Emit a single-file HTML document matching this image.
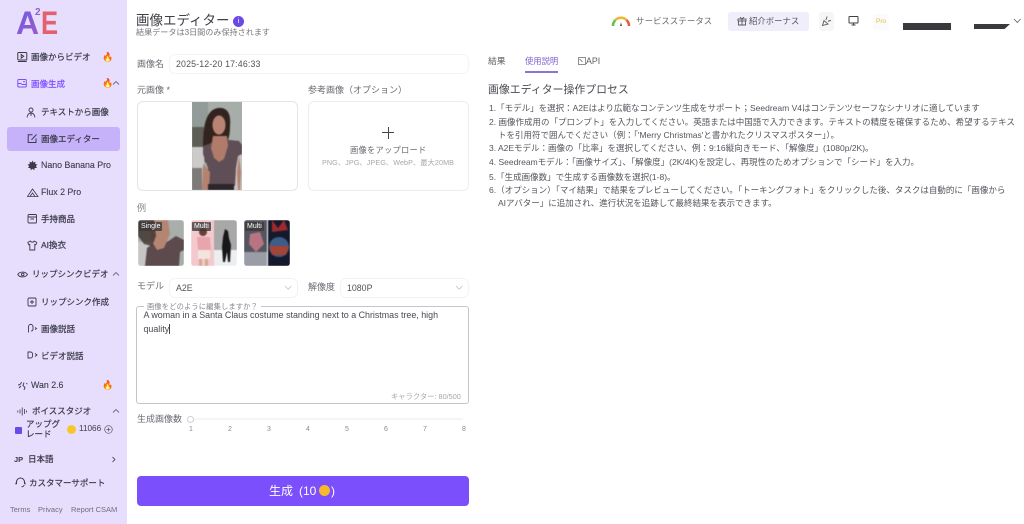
<!DOCTYPE html>
<html lang="ja"><head><meta charset="utf-8"><title>画像エディター</title>
<style>
html,body{margin:0;padding:0;width:1024px;height:524px;overflow:hidden;background:#fff}
body{font-family:"Liberation Sans","Noto Sans CJK JP",sans-serif;color:#3f3f46;position:relative;filter:blur(.3px)}
.t{position:absolute;white-space:nowrap;line-height:14px}
.s{position:absolute}
svg{position:absolute;overflow:visible}
.side{position:absolute;left:0;top:0;width:127px;height:524px;background:#e7defd}
.n{font-size:8.5px;color:#3a3a48;font-weight:400;-webkit-text-stroke:.2px #3a3a48}
.box{position:absolute;border:1px solid #ececf0;border-radius:6px;box-sizing:border-box;background:#fff}
.lbl{font-size:9px;color:#6b6b73}
.li{font-size:8.5px;color:#55555d}
.num{font-size:7px;color:#8a8a90;width:10px;text-align:center}
.tag{position:absolute;left:1px;top:2px;font-size:7px;line-height:9px;color:#fff;background:#3a3a3acc;padding:0 2px;border-radius:1px;white-space:nowrap}
.pic{filter:blur(.5px)}
</style></head><body>
<div class="side"></div>

<!-- logo -->
<div class="t" style="left:16px;top:8px;font-size:32px;line-height:30px;font-weight:700;background:linear-gradient(135deg,#6b5be6,#a05bc8);-webkit-background-clip:text;color:transparent">A</div>
<div class="t" style="left:35px;top:8px;font-size:10px;line-height:10px;font-weight:700;color:#8f62c8">2</div>
<div class="t" style="left:41px;top:8px;font-size:32px;line-height:30px;font-weight:700;color:#e4606f;transform-origin:left;transform:scaleX(.8)">E</div>

<!-- sidebar items -->
<svg style="left:17px;top:51px" width="12" height="12" fill="none" stroke="#3a3a48" stroke-width="1"><rect x=".8" y="1.5" width="9" height="7.5" rx="1"/><path d="M.8 10.5h9M4.2 3.5l2.5 1.8-2.5 1.8z"/></svg>
<div class="t n" style="left:31px;top:50px">画像からビデオ</div>
<div class="t" style="left:102px;top:50px;font-size:9px">🔥</div>

<svg style="left:17px;top:78px" width="12" height="12" fill="none" stroke="#7c4dff" stroke-width="1"><rect x=".8" y="1.5" width="8.5" height="7.5" rx="1"/><path d="M.8 5.5h3l1.5 1h4M6 3.8h2"/></svg>
<div class="t n" style="left:31px;top:77px;color:#7c4dff;-webkit-text-stroke:.2px #7c4dff">画像生成</div>
<div class="t" style="left:102px;top:76px;font-size:9px">🔥</div>
<svg style="left:112px;top:80px" width="9" height="6" fill="none" stroke="#6b6b78" stroke-width=".9"><path d="M1 4.500L4 1.500l3 3"/></svg>

<svg style="left:26px;top:107px" width="12" height="12" fill="none" stroke="#3a3a48" stroke-width=".9"><circle cx="5" cy="3" r="2"/><path d="M1 10.5c.5-3 2-4.500 4-4.500s3.500 1.500 4 4.500M5 6.500v2.500"/></svg>
<div class="t n" style="left:41px;top:105px">テキストから画像</div>

<div class="s" style="left:7px;top:127px;width:113px;height:24px;background:#c6b2fb;border-radius:3px"></div>
<svg style="left:27px;top:133px" width="12" height="12" fill="none" stroke="#3a3a48" stroke-width="1"><path d="M9 5.500V9.500H1.200V1.800H5.500M4.500 6.800L9.500 1.500"/></svg>
<div class="t n" style="left:41px;top:132px">画像エディター</div>

<svg style="left:27px;top:160px" width="11" height="11" fill="#3a3a48"><path d="M5.500 .5l1 2 2-.8-.3 2.200 2.300.8-1.700 1.300 1.200 2-2.300 0-.5 2.300-1.700-1.500-1.700 1.500-.5-2.300-2.300 0 1.200-2L.5 4.700l2.300-.8-.3-2.200 2 .8z"/></svg>
<div class="t n" style="left:41px;top:158px;font-size:8.800px;-webkit-text-stroke:.1px #3a3a48">Nano Banana Pro</div>

<svg style="left:27px;top:187px" width="12" height="11" fill="none" stroke="#3a3a48" stroke-width=".8"><path d="M.5 9.500L5.500 2l5.500 7.500zM3 9.500l2.500-3.500 2.500 3.500"/></svg>
<div class="t n" style="left:41px;top:185px;font-size:8.800px;-webkit-text-stroke:.1px #3a3a48">Flux 2 Pro</div>

<svg style="left:27px;top:213px" width="11" height="12" fill="none" stroke="#3a3a48" stroke-width=".9"><rect x="1" y="1.500" width="8.500" height="8.500" rx="1"/><path d="M1 4h8.500M3.500 6h3.500"/></svg>
<div class="t n" style="left:41px;top:212px">手持商品</div>

<svg style="left:27px;top:240px" width="11" height="11" fill="none" stroke="#3a3a48" stroke-width=".9"><path d="M3.500 1L.8 2.500l1 2.300 1-.4V10h5V4.400l1 .4 1-2.300L7.200 1C6.800 2.500 4 2.500 3.500 1z"/></svg>
<div class="t n" style="left:41px;top:238px">AI換衣</div>

<svg style="left:17px;top:270px" width="12" height="9" fill="none" stroke="#3a3a48" stroke-width=".9"><path d="M.8 4.500C2.500 1.500 8 1 10.500 4.500 8 8 2.500 7.500.8 4.500z"/><circle cx="5.700" cy="4.500" r="1.300"/></svg>
<div class="t n" style="left:32px;top:267px">リップシンクビデオ</div>
<svg style="left:112px;top:271px" width="9" height="6" fill="none" stroke="#6b6b78" stroke-width=".9"><path d="M1 4.500L4 1.500l3 3"/></svg>

<svg style="left:27px;top:297px" width="11" height="11" fill="none" stroke="#3a3a48" stroke-width=".9"><rect x="1" y="1" width="8" height="8" rx="1"/><path d="M5 3v4M3 5h4"/></svg>
<div class="t n" style="left:41px;top:295px">リップシンク作成</div>

<svg style="left:27px;top:323px" width="12" height="12" fill="none" stroke="#3a3a48" stroke-width=".9"><path d="M1.500 9.500V4c0-3.500 4.500-3.500 4.500 0v2c0 1.500-1 2-2 2M8 4.500l1.500 1L8 6.500"/></svg>
<div class="t n" style="left:41px;top:322px">画像説話</div>

<svg style="left:27px;top:351px" width="12" height="9" fill="none" stroke="#3a3a48" stroke-width=".9"><path d="M1 1h2.500a2 2 0 012 2v2a2 2 0 01-2 2H1zM8 2.500l2 1.500-2 1.500"/></svg>
<div class="t n" style="left:41px;top:349px">ビデオ説話</div>

<svg style="left:17px;top:380px" width="12" height="11" fill="none" stroke="#3a3a48" stroke-width=".9"><path d="M1 5c2 0 3-1 3.500-3M7 2.500L6 5.500l2 2-1 2.500M2 8l2-2M9 3.500l1.500.5"/></svg>
<div class="t n" style="left:31px;top:378px;font-size:8.800px;-webkit-text-stroke:.1px #3a3a48">Wan 2.6</div>
<div class="t" style="left:102px;top:378px;font-size:9px">🔥</div>

<svg style="left:17px;top:407px" width="11" height="9" fill="none" stroke="#3a3a48" stroke-width=".8"><path d="M.8 3.500v2M3 2.500v4M5.200 .5v8M7.400 2v5M9.600 3.500v2"/></svg>
<div class="t n" style="left:32px;top:404px">ボイススタジオ</div>
<svg style="left:112px;top:408px" width="9" height="6" fill="none" stroke="#6b6b78" stroke-width=".9"><path d="M1 4.500L4 1.500l3 3"/></svg>

<div class="s" style="left:15px;top:427px;width:7px;height:7px;background:#6a4bea;border-radius:1px"></div>
<div class="t n" style="left:26px;top:419px;line-height:10px;white-space:normal;width:36px">アップグレード</div>
<div class="s" style="left:67px;top:425px;width:9px;height:9px;border-radius:50%;background:#f6c72d"></div>
<div class="t" style="left:79px;top:422px;font-size:8.200px;color:#3a3a48">11066</div>
<svg style="left:104px;top:425px" width="9" height="9" fill="none" stroke="#55555f" stroke-width=".7"><circle cx="4.500" cy="4.500" r="3.800"/><path d="M4.500 2.500v4M2.500 4.500h4"/></svg>

<div class="t" style="left:14px;top:453px;font-size:7.500px;font-weight:700;color:#3a3a48">JP</div>
<div class="t n" style="left:28px;top:452px">日本語</div>
<svg style="left:111px;top:456px" width="6" height="8" fill="none" stroke="#55555f" stroke-width=".9"><path d="M1.500 1l2.500 2.500-2.500 2.500"/></svg>

<svg style="left:15px;top:477px" width="11" height="11" fill="none" stroke="#3a3a48" stroke-width="1"><path d="M1.500 7V5a4 4 0 018 0v2M1 5.500v2M10 5.500v2M9 8c0 1-1 1.800-2.500 1.800"/></svg>
<div class="t n" style="left:29px;top:476px">カスタマーサポート</div>

<div class="t" style="left:10px;top:503px;font-size:7.500px;color:#6e6e7c">Terms</div>
<div class="t" style="left:38px;top:503px;font-size:7.500px;color:#6e6e7c">Privacy</div>
<div class="t" style="left:71px;top:503px;font-size:7.500px;color:#6e6e7c">Report CSAM</div>

<!-- header -->
<div class="t" style="left:136px;top:13px;font-size:13.500px;line-height:16px;color:#3f3f46">画像エディター</div>
<div class="s" style="left:233px;top:16px;width:11px;height:11px;border-radius:50%;background:#6b48e8;color:#fff;font-size:7px;line-height:11px;text-align:center">i</div>
<div class="t" style="left:136px;top:26px;font-size:8.100px;color:#77777f">結果データは3日間のみ保持されます</div>

<!-- top right -->
<svg style="left:611px;top:15px" width="20" height="12" fill="none" stroke-width="2.500"><path d="M2 11a8 8 0 012.500-6" stroke="#5cc24e"/><path d="M4.500 5a8 8 0 0111 0" stroke="#f2b630"/><path d="M15.500 5a8 8 0 012.500 6" stroke="#e2574c"/><path d="M10 7.500l-1 3.500h2z" fill="#444" stroke="none"/></svg>
<div class="t" style="left:636px;top:14px;font-size:8.400px;color:#6b6b73;letter-spacing:.1px">サービスステータス</div>
<div class="s" style="left:728px;top:12px;width:81px;height:19px;border-radius:3px;background:#f0eefb"></div>
<svg style="left:737px;top:16px" width="10" height="10" fill="none" stroke="#55555f" stroke-width=".9"><rect x="1" y="3" width="8" height="2"/><path d="M1.500 5v4h7V5M5 3v6M3 1.200L5 3l2-1.800"/></svg>
<div class="t" style="left:749px;top:14px;font-size:8.400px;color:#55555f">紹介ボーナス</div>
<div class="s" style="left:819px;top:12px;width:15px;height:19px;background:#f6f6f7;border-radius:3px"></div>
<svg style="left:821px;top:15px" width="11" height="12" fill="none" stroke="#55555f" stroke-width=".9"><path d="M1.500 10.500L3 5.500l4 3.500zM5 5c0-1.500 1-2 1-3.500M7 6.500c1-1 2-1 3-.8"/></svg>
<svg style="left:848px;top:15px" width="11" height="11" fill="none" stroke="#3f3f46" stroke-width="1"><rect x="1" y="1.500" width="9" height="6.500" rx=".5"/><path d="M5.500 8v2M3.500 10h4"/></svg>
<div class="s" style="left:873px;top:14px;width:16px;height:16px;background:#fbfbfd;border-radius:3px"></div>
<div class="t" style="left:876px;top:15px;font-size:6.500px;color:#d9bd3f">Pro</div>
<div class="s" style="left:903px;top:23px;width:48px;height:7px;background:#3a3a3e"></div>
<div class="s" style="left:974px;top:24px;width:36px;height:5px;background:#3a3a3e;clip-path:polygon(0 0,100% 0,85% 100%,0 100%)"></div>
<svg style="left:1013px;top:18px" width="9" height="6" fill="none" stroke="#666" stroke-width=".9"><path d="M1 1l3.300 3.500L7.600 1"/></svg>

<!-- form -->
<div class="t lbl" style="left:137px;top:57px">画像名</div>
<div class="box" style="left:169px;top:54px;width:300px;height:20px;border-color:#f4f4f6"></div>
<div class="t" style="left:176px;top:57px;font-size:8.800px;color:#52525a;letter-spacing:.15px">2025-12-20 17:46:33</div>

<div class="t lbl" style="left:137px;top:83px">元画像 *</div>
<div class="t lbl" style="left:308px;top:83px">参考画像（オプション）</div>
<div class="box" style="left:137px;top:101px;width:161px;height:90px;border-color:#e5e5e8"></div>
<div class="s" style="left:192px;top:102px;width:50px;height:88px;overflow:hidden;background:#a9b1ac">
<svg class="pic" style="left:0;top:0" width="50" height="88">
<rect width="50" height="88" fill="#a7aeaa"/>
<rect x="0" y="0" width="16" height="26" fill="#929b97"/>
<rect x="0" y="25" width="12" height="20" fill="#5d5f56"/>
<rect x="0" y="45" width="12" height="43" fill="#cdcbca"/>
<rect x="0" y="66" width="10" height="22" fill="#7d7a78"/>
<rect x="40" y="52" width="10" height="36" fill="#c6c6c5"/>
<path d="M11 46C11 30 12 8 26 6c11-1 13 8 12 18 0 8-1 12-3 16l-12 6-6 16-4-2z" fill="#33231f"/>
<path d="M24 38h14l9 1 3 4v9l-4 2-2 12-1 18H14l2-18-5-14v-8l6-2z" fill="#5f4e55"/>
<path d="M21 34h14l1 10-4 13-5 3-5-4-3-10z" fill="#b07b6b"/>
<ellipse cx="27" cy="23" rx="6.500" ry="9.500" fill="#ba8474"/>
<path d="M11 62l-1 26h7l1-18z" fill="#b4826f"/>
<path d="M47 53l-2 18 1 17h2l1-18z" fill="#b4826f"/>
<rect x="16" y="82" width="26" height="6" fill="#2c2628"/>
</svg></div>
<div class="box" style="left:308px;top:101px;width:161px;height:90px;border-color:#ededf0"></div>
<div class="s" style="left:382px;top:132px;width:12px;height:1px;background:#444"></div>
<div class="s" style="left:387.500px;top:126.500px;width:1px;height:12px;background:#444"></div>
<div class="t" style="left:350px;top:143px;font-size:8.300px;color:#6b6b73;letter-spacing:.2px">画像をアップロード</div>
<div class="t" style="left:322px;top:156px;font-size:7.200px;color:#a8a8ae;letter-spacing:.1px">PNG、JPG、JPEG、WebP、最大20MB</div>

<div class="t lbl" style="left:137px;top:201px;color:#85858c">例</div>
<!-- examples -->
<div class="s" style="left:138px;top:220px;width:46px;height:46px;border-radius:3px;overflow:hidden">
<svg class="pic" style="left:0;top:0" width="46" height="46"><rect width="46" height="46" fill="#a8aeaa"/><rect y="22" width="14" height="24" fill="#c8c6c4"/><path d="M7 46l2-18 8-6h12l9-6 8 4v10l-4 2-1 14z" fill="#5c4a4d"/><path d="M12 0h18l2 14-6 14-7 2-6-10z" fill="#b58573"/><path d="M0 0h16l2 16-4 10-8-2L0 16z" fill="#3b2e2a" opacity=".8"/></svg>
<div class="tag">Single</div></div>
<div class="s" style="left:191px;top:220px;width:46px;height:46px;border-radius:3px;overflow:hidden">
<svg class="pic" style="left:0;top:0" width="46" height="46"><rect width="23" height="46" fill="#f4c9cd"/><rect x="23" width="23" height="46" fill="#a9a8a9"/><rect x="23" y="30" width="23" height="16" fill="#eceef0"/><circle cx="12" cy="12" r="4" fill="#6b3d33"/><path d="M6 17h13l1 13H7z" fill="#e8a5ad"/><rect x="7" y="30" width="12" height="9" fill="#f0e6df"/><rect x="8" y="39" width="3" height="7" fill="#d9a692"/><rect x="14" y="39" width="3" height="7" fill="#d9a692"/><path d="M34 9l3 2 1 7 2 7-1 17h-2l-1-10-2 10h-2l-1-15 1-10z" fill="#17171a"/></svg>
<div class="tag">Multi</div></div>
<div class="s" style="left:244px;top:220px;width:46px;height:46px;border-radius:3px;overflow:hidden">
<svg class="pic" style="left:0;top:0" width="46" height="46"><rect width="23" height="46" fill="#54555f"/><rect y="32" width="23" height="14" fill="#9a9ca6"/><path d="M6 14l10-2 4 12-8 8-7-8z" fill="#b77582"/><rect x="24" width="22" height="46" fill="#141a2c"/><path d="M28 0l6 8 6-8 4 10-16 2z" fill="#9d2a2e"/><circle cx="35" cy="27" r="10" fill="#3d5c8a"/><path d="M25 26h20l-3 9H28z" fill="#a34434"/></svg>
<div class="tag">Multi</div></div>

<div class="t lbl" style="left:137px;top:279px">モデル</div>
<div class="box" style="left:169px;top:278px;width:129px;height:20px;border-color:#f3f3f5"></div>
<div class="t" style="left:176px;top:281px;font-size:8.800px;color:#52525a">A2E</div>
<svg style="left:284px;top:285px" width="9" height="6" fill="none" stroke="#c2c2c8" stroke-width=".8"><path d="M1 1l3.200 3.300L7.400 1"/></svg>
<div class="t lbl" style="left:308px;top:280px">解像度</div>
<div class="box" style="left:340px;top:278px;width:129px;height:20px;border-color:#f3f3f5"></div>
<div class="t" style="left:347px;top:281px;font-size:8.800px;color:#52525a">1080P</div>
<svg style="left:455px;top:285px" width="9" height="6" fill="none" stroke="#c2c2c8" stroke-width=".8"><path d="M1 1l3.200 3.300L7.400 1"/></svg>

<div class="box" style="left:136px;top:306px;width:333px;height:98px;border-color:#c4c4ce;border-radius:3px"></div>
<div class="t" style="left:144px;top:300px;font-size:7.300px;color:#85858c;background:#fff;padding:0 3px;letter-spacing:.1px">画像をどのように編集しますか？</div>
<div class="s" style="left:143.500px;top:308px;width:318px;font-size:8.900px;line-height:14px;color:#4a4a52">A woman in a Santa Claus costume standing next to a Christmas tree, high quality<span style="border-left:1px solid #444"></span></div>
<div class="t" style="left:391px;top:390px;font-size:7.300px;color:#a6a6ac">キャラクター: 80/500</div>

<div class="t lbl" style="left:137px;top:412px">生成画像数</div>
<div class="s" style="left:191px;top:418px;width:272px;height:2px;background:#f5f5f6"></div>
<div class="s" style="left:187px;top:416px;width:7px;height:7px;border:1px solid #cfcfd6;border-radius:50%;background:#fff;box-sizing:border-box"></div>
<div class="t num" style="left:186px;top:423px">1</div>
<div class="t num" style="left:225px;top:423px">2</div>
<div class="t num" style="left:264px;top:423px">3</div>
<div class="t num" style="left:303px;top:423px">4</div>
<div class="t num" style="left:342px;top:423px">5</div>
<div class="t num" style="left:381px;top:423px">6</div>
<div class="t num" style="left:420px;top:423px">7</div>
<div class="t num" style="left:459px;top:423px">8</div>

<div class="s" style="left:137px;top:476px;width:332px;height:30px;background:#7c4ffd;border-radius:4px"></div>
<div class="t" style="left:269px;top:484px;font-size:12px;color:#fff">生成</div>
<div class="t" style="left:299px;top:484px;font-size:12px;color:#fff">(10</div>
<div class="s" style="left:319px;top:485px;width:11px;height:11px;border-radius:50%;background:#f6b92b"></div>
<div class="t" style="left:331px;top:484px;font-size:12px;color:#fff">)</div>

<!-- right panel -->
<div class="t" style="left:488px;top:54px;font-size:8.800px;color:#5f5f67">結果</div>
<div class="t" style="left:525px;top:54px;font-size:8.300px;color:#7c62cf">使用説明</div>
<div class="s" style="left:525px;top:71px;width:33px;height:1.500px;background:#8b74d6"></div>
<svg style="left:578px;top:57px" width="9" height="9" fill="none" stroke="#5f5f67" stroke-width=".7"><rect x=".5" y=".5" width="7" height="7"/><path d="M1.500 2l3 3"/></svg>
<div class="t" style="left:586px;top:54px;font-size:8.800px;color:#5f5f67">API</div>

<div class="t" style="left:488px;top:82px;font-size:10.900px;line-height:16px;color:#4a4a52">画像エディター操作プロセス</div>
<div class="t li" style="left:489px;top:101px">1.「モデル」を選択：A2Eはより広範なコンテンツ生成をサポート；Seedream V4はコンテンツセーフなシナリオに適しています</div>
<div class="t li" style="left:489px;top:115px">2. 画像作成用の「プロンプト」を入力してください。英語または中国語で入力できます。テキストの精度を確保するため、希望するテキス</div>
<div class="t li" style="left:498px;top:128px">トを引用符で囲んでください（例：「'Merry Christmas'と書かれたクリスマスポスター」）。</div>
<div class="t li" style="left:489px;top:141px">3. A2Eモデル：画像の「比率」を選択してください、例：9:16縦向きモード、「解像度」(1080p/2K)。</div>
<div class="t li" style="left:489px;top:155px">4. Seedreamモデル：「画像サイズ」、「解像度」(2K/4K)を設定し、再現性のためオプションで「シード」を入力。</div>
<div class="t li" style="left:489px;top:170px">5.「生成画像数」で生成する画像数を選択(1-8)。</div>
<div class="t li" style="left:489px;top:183px">6.（オプション）「マイ結果」で結果をプレビューしてください。「トーキングフォト」をクリックした後、タスクは自動的に「画像から</div>
<div class="t li" style="left:498px;top:196px">AIアバター」に追加され、進行状況を追跡して最終結果を表示できます。</div>
</body></html>
